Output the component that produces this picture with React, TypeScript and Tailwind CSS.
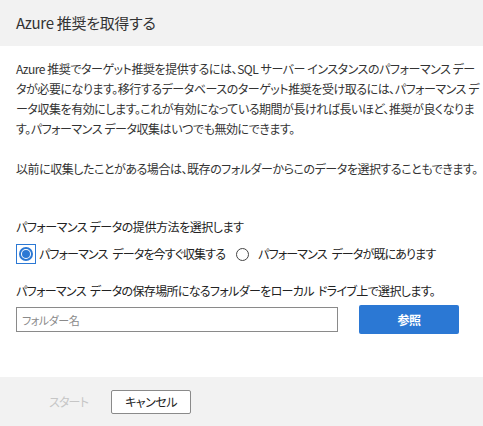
const font = { fontFamily: '"Segoe UI", "Noto Sans CJK JP", sans-serif' }

export default function App() {
  return (
    <div className="w-[483px] h-[426px] flex flex-col bg-white text-[#333] overflow-hidden [font-feature-settings:'palt'] tracking-[-0.45px]" style={font}>
      <div className="h-[46px] shrink-0 bg-[#f2f2f2] flex items-center px-4">
        <h1 className="text-[15px] text-[#333] tracking-[-0.3px]">Azure 推奨を取得する</h1>
      </div>

      <div className="flex-1 min-h-0 flex flex-col pl-4 pr-[2px] pt-[13px]">
        <p className="text-[12px] leading-[20px] text-[#333]">
          Azure 推奨でターゲット推奨を提供するには、SQL サーバー インスタンスのパフォーマンス データが必要になります。移行するデータベースのターゲット推奨を受け取るには、パフォーマンス データ収集を有効にします。これが有効になっている期間が長ければ長いほど、推奨が良くなります。パフォーマンス データ収集はいつでも無効にできます。
        </p>
        <p className="mt-[20px] text-[12px] leading-[20px] text-[#333]">
          以前に収集したことがある場合は、既存のフォルダーからこのデータを選択することもできます。
        </p>

        <div className="mt-[38px] text-[12px] leading-[20px] text-[#222]">パフォーマンス データの提供方法を選択します</div>

        <div className="mt-[7px] flex items-center text-[12px] text-[#222] whitespace-nowrap tracking-[-0.85px] [word-spacing:3px]">
          <label className="flex items-center">
            <span className="w-[20px] h-[20px] border border-[#2b78d4] flex items-center justify-center">
              <span className="w-[14px] h-[14px] rounded-full border-2 border-[#2b78d4] flex items-center justify-center">
                <span className="w-[8px] h-[8px] rounded-full bg-[#2b78d4]" />
              </span>
            </span>
            <span className="ml-[3px]">パフォーマンス データを今すぐ収集する</span>
          </label>
          <label className="flex items-center ml-[11px]">
            <span className="w-[13px] h-[13px] rounded-full border border-[#444]" />
            <span className="ml-[9px]">パフォーマンス データが既にあります</span>
          </label>
        </div>

        <div className="mt-[17px] text-[12px] leading-[20px] text-[#222] whitespace-nowrap tracking-[-0.65px] [word-spacing:2px]">
          パフォーマンス データの保存場所になるフォルダーをローカル ドライブ上で選択します。
        </div>

        <div className="mt-[4px] flex items-center">
          <input
            className="w-[322px] h-[25px] border border-[#8a8a8a] px-[5px] text-[11px] placeholder:text-[#8a8a8a] outline-none"
            style={font}
            placeholder="フォルダー名"
          />
          <button className="ml-[21px] w-[100px] h-[29px] rounded-[2px] bg-[#2b78d4] text-white text-[12px] font-bold">
            参照
          </button>
        </div>
      </div>

      <div className="h-[49px] shrink-0 bg-[#f2f2f2] flex items-center">
        <span className="ml-[49px] text-[12px] text-[#c6c6c6] tracking-[-0.8px]">スタート</span>
        <button className="ml-[23px] w-[80px] h-[24px] bg-white border border-[#8a8a8a] rounded-[2px] text-[12px] text-[#222]">
          キャンセル
        </button>
      </div>
    </div>
  )
}
